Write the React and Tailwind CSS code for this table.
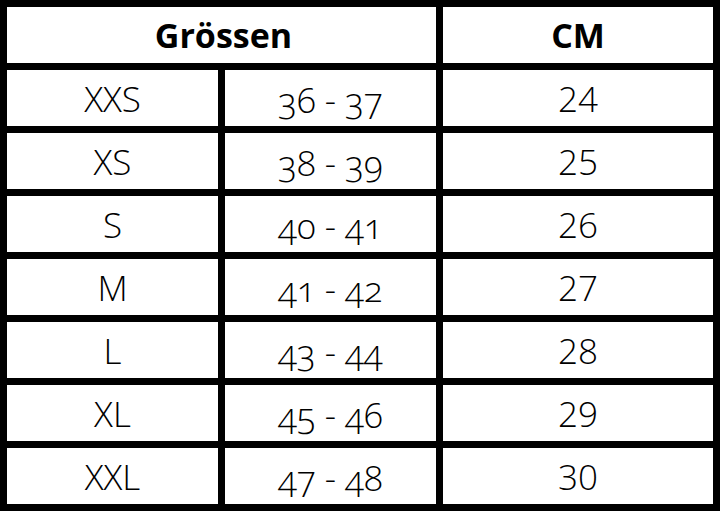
const ROWS = [
  { size: "XXS", eu: "36 - 37", cm: "24" },
  { size: "XS", eu: "38 - 39", cm: "25" },
  { size: "S", eu: "40 - 41", cm: "26" },
  { size: "M", eu: "41 - 42", cm: "27" },
  { size: "L", eu: "43 - 44", cm: "28" },
  { size: "XL", eu: "45 - 46", cm: "29" },
  { size: "XXL", eu: "47 - 48", cm: "30" },
];

function Cell({ children, className = "" }) {
  return (
    <div
      className={`bg-white flex items-center justify-center text-black leading-none ${className}`}
    >
      {children}
    </div>
  );
}

export default function App() {
  return (
    <div
      className="w-[720px] h-[511px] bg-black p-[7px] grid grid-cols-[211px_211px_270px] auto-rows-[56px] gap-[7px]"
      style={{ fontFamily: '"Open Sans", "Noto Sans", sans-serif' }}
    >
      {/* header */}
      <Cell className="col-span-2 text-[34px] font-bold pl-[4px]">Grössen</Cell>
      <Cell className="text-[34px] font-bold">CM</Cell>

      {ROWS.map((r) => (
        <div key={r.size} className="contents">
          <Cell className="text-[35px] font-[350] pt-[1px]">{r.size}</Cell>
          <Cell className="text-[35px] font-[350] oldstyle-nums pt-[3px]">{r.eu}</Cell>
          <Cell className="text-[35px] font-[350] pt-[1px]">{r.cm}</Cell>
        </div>
      ))}
    </div>
  );
}
